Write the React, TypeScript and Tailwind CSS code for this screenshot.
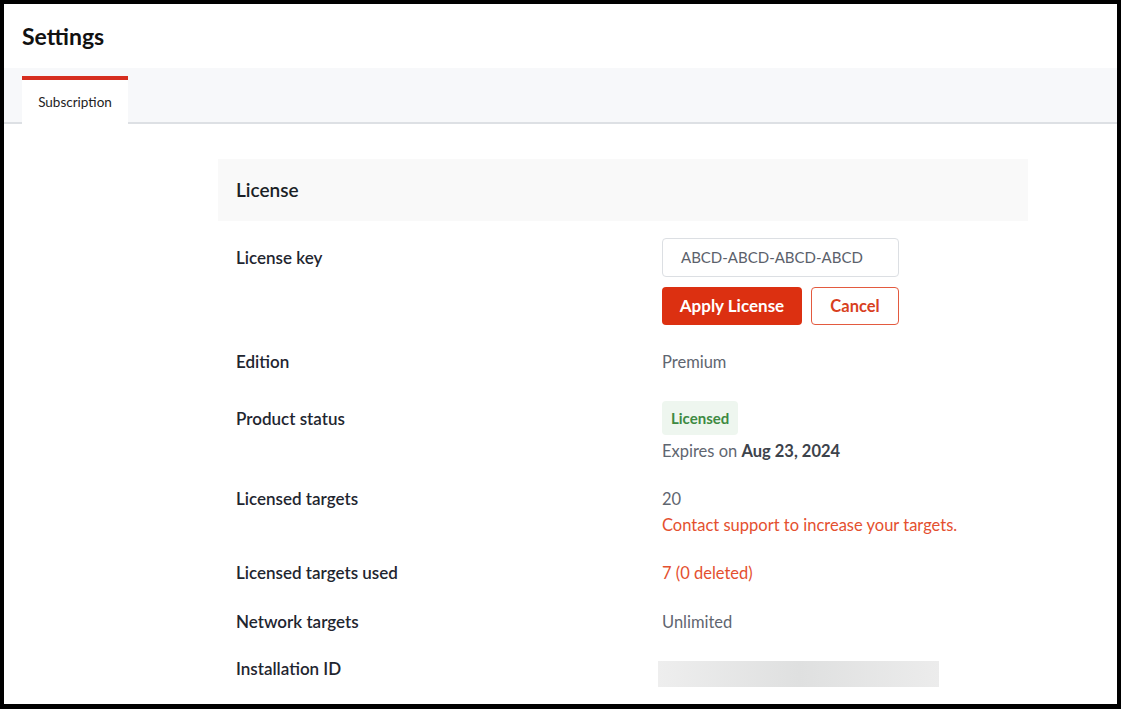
import React from "react";

const font = { fontFamily: "Lato, 'Noto Sans', sans-serif" };

function Row({
  label,
  labelClass = "",
  className = "",
  children,
}: {
  label: string;
  labelClass?: string;
  className?: string;
  children: React.ReactNode;
}) {
  return (
    <div className={`flex ${className}`}>
      <div
        className={`w-[426px] shrink-0 text-[17px] leading-6 font-semibold text-[#1f2630] ${labelClass}`}
      >
        {label}
      </div>
      <div className="flex-1">{children}</div>
    </div>
  );
}

export default function App() {
  return (
    <div
      className="w-[1121px] h-[709px] overflow-hidden bg-white border-black border-t-4 border-l-4 border-r-4 border-b-[5px]"
      style={font}
    >
      {/* Header */}
      <div className="h-[64px] flex items-center pl-[18px]">
        <h1 className="text-[23px] font-bold text-[#111]">Settings</h1>
      </div>

      {/* Tabs */}
      <div className="h-[56px] bg-[#f7f8fa] border-b-2 border-[#dde0e4] flex items-end pl-[18px]">
        <div className="w-[106px] h-[48px] -mb-[2px] bg-white border-t-4 border-[#d62e1f] flex items-center justify-center">
          <span className="text-[13.5px] text-[#222]">Subscription</span>
        </div>
      </div>

      {/* Content */}
      <div className="ml-[214px] w-[810px] mt-[35px]">
        <div className="h-[62px] bg-[#f9f9f9] flex items-center pl-[18px]">
          <h2 className="text-[19px] font-semibold text-[#1a1f26]">License</h2>
        </div>

        <div className="pl-[18px]">
          <Row label="License key" labelClass="pt-2" className="mt-[17px]">
            <div className="w-[237px] h-[39px] rounded-[4px] border border-[#dcdfe3] flex items-center pl-[18px] text-[15px] text-[#5b616b]">
              ABCD-ABCD-ABCD-ABCD
            </div>
            <div className="flex gap-[9px] mt-[10px]">
              <button className="w-[140px] h-[38px] rounded-[4px] bg-[#dc3011] text-white font-bold text-[17px]">
                Apply License
              </button>
              <button className="w-[88px] h-[38px] rounded-[4px] border border-[#e35a3f] text-[#d8401f] font-bold text-[16.5px] bg-white">
                Cancel
              </button>
            </div>
          </Row>

          <Row label="Edition" className="mt-[25px]">
            <div className="text-[16.5px] leading-6 text-[#5f6670]">Premium</div>
          </Row>

          <Row label="Product status" labelClass="pt-[6px]" className="mt-[27px]">
            <span className="inline-flex items-center h-[34px] px-[9px] rounded-[4px] bg-[#eef6ef] text-[#3d8a42] text-[15px] font-bold">
              Licensed
            </span>
            <div className="mt-1 text-[16.5px] leading-6 text-[#5f6670]">
              Expires on <span className="font-bold text-[#3d434b]">Aug 23, 2024</span>
            </div>
          </Row>

          <Row label="Licensed targets" labelClass="leading-[26px]" className="mt-[23px]">
            <div className="text-[16.5px] leading-[26px] text-[#5f6670]">20</div>
            <div className="text-[16.5px] leading-[26px] text-[#e4502f]">
              Contact support to increase your targets.
            </div>
          </Row>

          <Row label="Licensed targets used" className="mt-[23px]">
            <div className="text-[16.5px] leading-6 text-[#e4502f]">7 (0 deleted)</div>
          </Row>

          <Row label="Network targets" className="mt-[25px]">
            <div className="text-[16.5px] leading-6 text-[#5f6670]">Unlimited</div>
          </Row>

          <Row label="Installation ID" className="mt-[23px]">
            <div className="-ml-1 mt-1 w-[281px] h-[26px] bg-gradient-to-r from-[#eeeeee] via-[#dfe0e0] to-[#ececec]" />
          </Row>
        </div>
      </div>
    </div>
  );
}
